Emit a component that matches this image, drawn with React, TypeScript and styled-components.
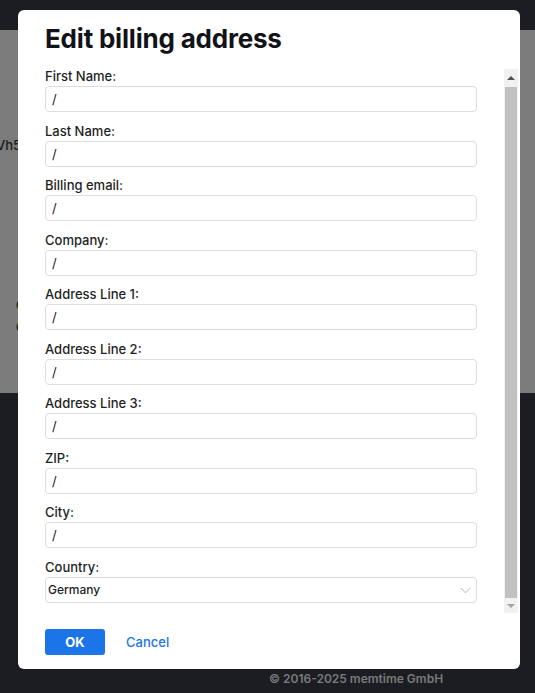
import React from "react";
import styled, { createGlobalStyle } from "styled-components";

const Global = createGlobalStyle`
  html, body { margin: 0; padding: 0; background: #1c1d22; }
  body { font-family: Inter, "Noto Sans", sans-serif; overflow: hidden; width: 535px; height: 693px; }
  * { box-sizing: border-box; }
`;

const Page = styled.div`
  position: relative;
  width: 535px;
  height: 693px;
  display: flex;
  flex-direction: column;
  overflow: hidden;
`;

const TopBar = styled.div`
  height: 30px;
  background: #1c1d22;
`;

const Content = styled.div`
  height: 363px;
  background: #7b7b7b;
  display: flex;
  flex-direction: column;
  padding-top: 107px;
  font-size: 13px;
  color: #1a1a1a;
`;

const BgLine = styled.div<{ $mt?: number; $ml: number }>`
  margin-left: ${(p) => p.$ml}px;
  margin-top: ${(p) => p.$mt ?? 0}px;
  white-space: nowrap;
  line-height: 16px;
  font-weight: 500;
`;

const Footer = styled.div`
  flex: 1;
  display: flex;
  align-items: flex-end;
  padding: 0 0 7px 269px;
  color: #7a7a7a;
  font-weight: 600;
  font-size: 12px;
`;

const Modal = styled.div`
  position: absolute;
  left: 18px;
  top: 10px;
  width: 502px;
  height: 659px;
  background: #fff;
  border-radius: 6px;
  display: flex;
  flex-direction: column;
  padding: 14px 2px 14px 27px;
`;

const Title = styled.h1`
  margin: 0;
  font-size: 26px;
  line-height: 30px;
  font-weight: 700;
  color: #111318;
  letter-spacing: -0.2px;
  height: 45px;
`;

const ScrollRow = styled.div`
  height: 544px;
  display: flex;
`;

const Viewport = styled.div`
  flex: 1;
  overflow: hidden;
`;

const Scrollbar = styled.div`
  width: 14px;
  background: #f1f1f1;
  display: flex;
  flex-direction: column;
`;

const ScrollArrow = styled.div<{ $h: number }>`
  height: ${(p) => p.$h}px;
  display: flex;
  align-items: center;
  justify-content: center;
`;

const Thumb = styled.div`
  flex: 1;
  margin: 0 1px;
  background: #c1c1c1;
`;

const Fields = styled.div`
  display: flex;
  flex-direction: column;
  gap: 11.5px;
  padding-right: 27px;
`;

const Field = styled.div`
  display: flex;
  flex-direction: column;
  gap: 3px;
`;

const Label = styled.label`
  font-size: 13px;
  line-height: 14px;
  font-weight: 500;
  color: #1e1f24;
`;

const Input = styled.input`
  height: 26px;
  width: 432px;
  border: 1px solid #dcdde0;
  border-radius: 4px;
  padding: 0 6px;
  font-family: inherit;
  font-size: 13px;
  color: #222;
  outline: none;
  background: #fff;
`;

const SelectWrap = styled.div`
  position: relative;
  width: 432px;
  height: 26px;
`;

const Select = styled.select`
  appearance: none;
  width: 100%;
  height: 100%;
  border: 1px solid #dcdde0;
  border-radius: 4px;
  padding: 0 2px;
  font-family: inherit;
  font-size: 12px;
  font-weight: 500;
  color: #1e1f24;
  background: #fff;
  outline: none;
`;

const Chevron = styled.svg`
  position: absolute;
  right: 6px;
  top: 10px;
  pointer-events: none;
`;

const Actions = styled.div`
  display: flex;
  align-items: center;
  gap: 21px;
  margin-top: 16px;
`;

const OkButton = styled.button`
  width: 60px;
  height: 26px;
  border: none;
  border-radius: 3px;
  background: #1b75e8;
  color: #fff;
  font-family: inherit;
  font-weight: 700;
  font-size: 13px;
`;

const CancelButton = styled.button`
  border: none;
  background: none;
  padding: 0;
  color: #1b75e8;
  font-family: inherit;
  font-weight: 500;
  font-size: 13px;
`;

const fields = [
  "First Name:",
  "Last Name:",
  "Billing email:",
  "Company:",
  "Address Line 1:",
  "Address Line 2:",
  "Address Line 3:",
  "ZIP:",
  "City:",
];

export default function App() {
  return (
    <>
      <Global />
      <Page>
        <TopBar />
        <Content>
          <BgLine $ml={-4}>Vh5</BgLine>
          <BgLine $ml={16} $mt={143}>c</BgLine>
          <BgLine $ml={16} $mt={6}>c</BgLine>
        </Content>
        <Footer>© 2016-2025 memtime GmbH</Footer>
        <Modal>
          <Title>Edit billing address</Title>
          <ScrollRow>
            <Viewport>
              <Fields>
                {fields.map((f) => (
                  <Field key={f}>
                    <Label>{f}</Label>
                    <Input defaultValue="/" />
                  </Field>
                ))}
                <Field>
                  <Label>Country:</Label>
                  <SelectWrap>
                    <Select defaultValue="Germany">
                      <option>Germany</option>
                    </Select>
                    <Chevron width="11" height="7" viewBox="0 0 11 7">
                      <path d="M0.5 0.8 L5.5 5.8 L10.5 0.8" fill="none" stroke="#b5b5b5" strokeWidth="1" />
                    </Chevron>
                  </SelectWrap>
                </Field>
              </Fields>
            </Viewport>
            <Scrollbar>
              <ScrollArrow $h={18}>
                <svg width="8" height="4" viewBox="0 0 8 4">
                  <path d="M0 4 L4 0 L8 4 Z" fill="#505050" />
                </svg>
              </ScrollArrow>
              <Thumb />
              <ScrollArrow $h={15}>
                <svg width="8" height="4" viewBox="0 0 8 4">
                  <path d="M0 0 L4 4 L8 0 Z" fill="#a3a3a3" />
                </svg>
              </ScrollArrow>
            </Scrollbar>
          </ScrollRow>
          <Actions>
            <OkButton>OK</OkButton>
            <CancelButton>Cancel</CancelButton>
          </Actions>
        </Modal>
      </Page>
    </>
  );
}
